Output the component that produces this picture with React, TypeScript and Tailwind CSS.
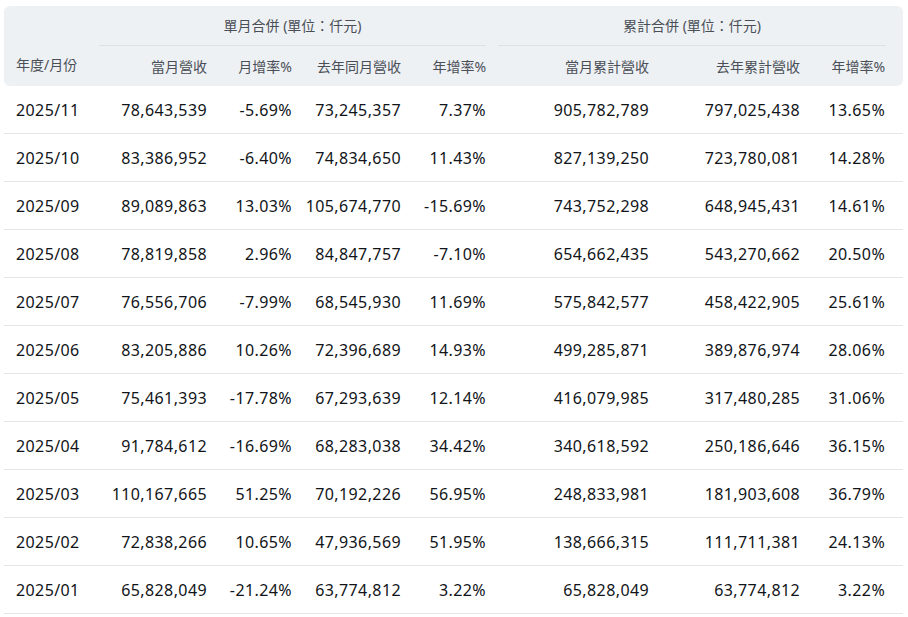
import React from 'react';

type Row = {
  ym: string;
  rev: string;
  mom: string;
  lastRev: string;
  yoy: string;
  cum: string;
  lastCum: string;
  cumYoy: string;
};

const rows: Row[] = [
  { ym: '2025/11', rev: '78,643,539', mom: '-5.69%', lastRev: '73,245,357', yoy: '7.37%', cum: '905,782,789', lastCum: '797,025,438', cumYoy: '13.65%' },
  { ym: '2025/10', rev: '83,386,952', mom: '-6.40%', lastRev: '74,834,650', yoy: '11.43%', cum: '827,139,250', lastCum: '723,780,081', cumYoy: '14.28%' },
  { ym: '2025/09', rev: '89,089,863', mom: '13.03%', lastRev: '105,674,770', yoy: '-15.69%', cum: '743,752,298', lastCum: '648,945,431', cumYoy: '14.61%' },
  { ym: '2025/08', rev: '78,819,858', mom: '2.96%', lastRev: '84,847,757', yoy: '-7.10%', cum: '654,662,435', lastCum: '543,270,662', cumYoy: '20.50%' },
  { ym: '2025/07', rev: '76,556,706', mom: '-7.99%', lastRev: '68,545,930', yoy: '11.69%', cum: '575,842,577', lastCum: '458,422,905', cumYoy: '25.61%' },
  { ym: '2025/06', rev: '83,205,886', mom: '10.26%', lastRev: '72,396,689', yoy: '14.93%', cum: '499,285,871', lastCum: '389,876,974', cumYoy: '28.06%' },
  { ym: '2025/05', rev: '75,461,393', mom: '-17.78%', lastRev: '67,293,639', yoy: '12.14%', cum: '416,079,985', lastCum: '317,480,285', cumYoy: '31.06%' },
  { ym: '2025/04', rev: '91,784,612', mom: '-16.69%', lastRev: '68,283,038', yoy: '34.42%', cum: '340,618,592', lastCum: '250,186,646', cumYoy: '36.15%' },
  { ym: '2025/03', rev: '110,167,665', mom: '51.25%', lastRev: '70,192,226', yoy: '56.95%', cum: '248,833,981', lastCum: '181,903,608', cumYoy: '36.79%' },
  { ym: '2025/02', rev: '72,838,266', mom: '10.65%', lastRev: '47,936,569', yoy: '51.95%', cum: '138,666,315', lastCum: '111,711,381', cumYoy: '24.13%' },
  { ym: '2025/01', rev: '65,828,049', mom: '-21.24%', lastRev: '63,774,812', yoy: '3.22%', cum: '65,828,049', lastCum: '63,774,812', cumYoy: '3.22%' },
];

const font = "font-['Noto_Sans','Noto_Sans_CJK_TC',sans-serif]";

export default function App() {
  return (
    <div className={`bg-white min-h-screen pt-[6px] px-[4px] ${font}`}>
      <table className="w-[899px] table-fixed border-separate border-spacing-0">
        <colgroup>
          <col className="w-[89px]" />
          <col className="w-[120px]" />
          <col className="w-[85px]" />
          <col className="w-[109px]" />
          <col className="w-[85px]" />
          <col className="w-[163px]" />
          <col className="w-[151px]" />
          <col className="w-[97px]" />
        </colgroup>
        <thead className="text-[14px] text-[#4a4f57]">
          <tr className="h-[40px]">
            <th rowSpan={2} className="bg-[#eef1f4] rounded-tl-[6px] rounded-bl-[6px] align-bottom text-left font-normal pl-[12px] pb-[11px]">
              年度/月份
            </th>
            <th colSpan={4} className="bg-[#eef1f4] font-normal px-[6px] p-0">
              <div className="h-[40px] flex items-center justify-center border-b border-[#dde1e6] pb-[1px]">
                單月合併 (單位：仟元)
              </div>
            </th>
            <th colSpan={3} className="bg-[#eef1f4] rounded-tr-[6px] font-normal pl-[6px] pr-[17px] p-0">
              <div className="h-[40px] flex items-center justify-center border-b border-[#dde1e6] pb-[1px]">
                累計合併 (單位：仟元)
              </div>
            </th>
          </tr>
          <tr className="h-[40px]">
            <th className="bg-[#eef1f4] text-right font-normal px-[6px]">當月營收</th>
            <th className="bg-[#eef1f4] text-right font-normal px-[6px]">月增率%</th>
            <th className="bg-[#eef1f4] text-right font-normal px-[6px]">去年同月營收</th>
            <th className="bg-[#eef1f4] text-right font-normal px-[6px]">年增率%</th>
            <th className="bg-[#eef1f4] text-right font-normal px-[6px]">當月累計營收</th>
            <th className="bg-[#eef1f4] text-right font-normal px-[6px]">去年累計營收</th>
            <th className="bg-[#eef1f4] text-right font-normal pl-[6px] pr-[18px] rounded-br-[6px]">年增率%</th>
          </tr>
        </thead>
        <tbody className="text-[16px] tracking-[0.4px] text-[#111418]">
          {rows.map((r) => (
            <tr key={r.ym} className="h-[48px]">
              <td className="border-b border-[#e3e5e8] pl-[12px] text-left whitespace-nowrap">{r.ym}</td>
              <td className="border-b border-[#e3e5e8] px-[6px] text-right">{r.rev}</td>
              <td className="border-b border-[#e3e5e8] px-[6px] text-right">{r.mom}</td>
              <td className="border-b border-[#e3e5e8] px-[6px] text-right">{r.lastRev}</td>
              <td className="border-b border-[#e3e5e8] px-[6px] text-right">{r.yoy}</td>
              <td className="border-b border-[#e3e5e8] px-[6px] text-right">{r.cum}</td>
              <td className="border-b border-[#e3e5e8] px-[6px] text-right">{r.lastCum}</td>
              <td className="border-b border-[#e3e5e8] pl-[6px] pr-[18px] text-right">{r.cumYoy}</td>
            </tr>
          ))}
        </tbody>
      </table>
    </div>
  );
}
